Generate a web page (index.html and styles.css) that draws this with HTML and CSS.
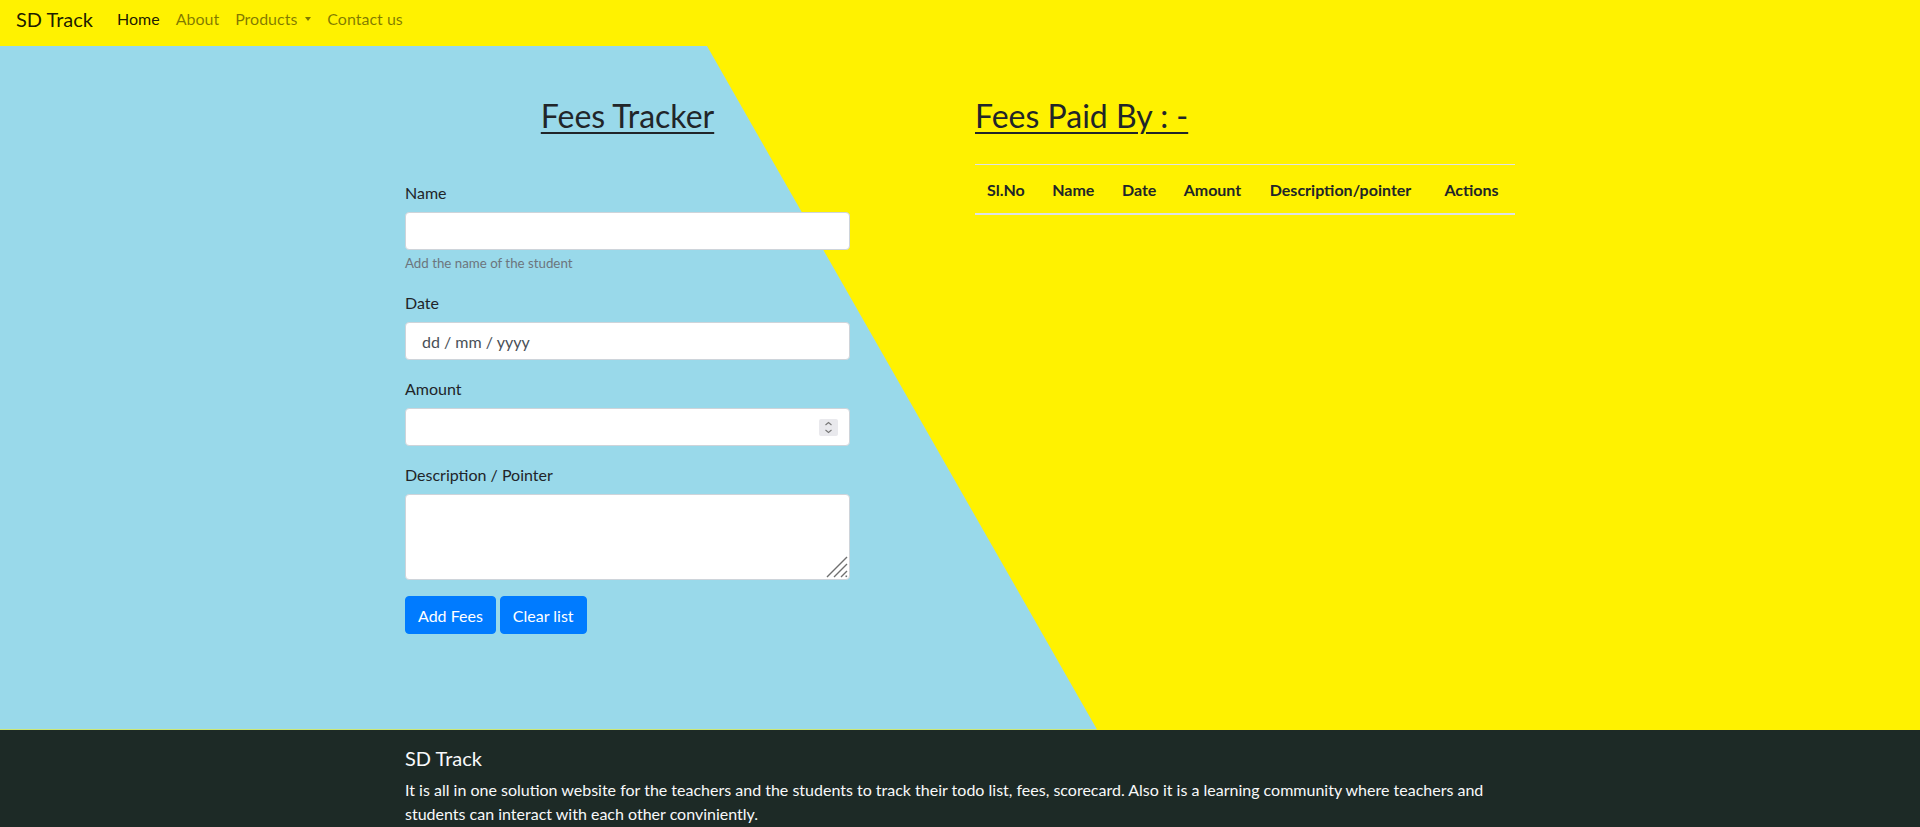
FILE: index.html
```html
<!DOCTYPE html>
<html lang="en">
<head>
<meta charset="utf-8">
<title>SD Track - Fees Tracker</title>
<link rel="stylesheet" href="styles.css">
</head>
<body>
<nav class="navbar">
  <a class="brand" href="#">SD Track</a>
  <ul class="nav-links">
    <li><a class="nav-link active" href="#">Home</a></li>
    <li><a class="nav-link" href="#">About</a></li>
    <li><a class="nav-link" href="#">Products<span class="caret"></span></a></li>
    <li><a class="nav-link" href="#">Contact us</a></li>
  </ul>
</nav>

<main class="hero">
  <div class="container">
    <div class="row">
      <section class="col-form">
        <h2 class="title title-center">Fees Tracker</h2>
        <form class="form">
          <div class="form-group">
            <label class="label" for="name">Name</label>
            <input class="form-control" id="name" type="text">
            <small class="help">Add the name of the student</small>
          </div>
          <div class="form-group">
            <label class="label" for="date">Date</label>
            <input class="form-control date-input" id="date" type="text" placeholder="dd / mm / yyyy">
          </div>
          <div class="form-group">
            <label class="label" for="amount">Amount</label>
            <div class="field">
              <input class="form-control" id="amount" type="text">
              <span class="spinner">
                <svg width="19" height="17" viewBox="0 0 19 17"><path d="M6.5 6 L9.5 3.5 L12.5 6" fill="none" stroke="#777" stroke-width="1.1"/><path d="M6.5 11 L9.5 13.5 L12.5 11" fill="none" stroke="#777" stroke-width="1.1"/></svg>
              </span>
            </div>
          </div>
          <div class="form-group">
            <label class="label" for="desc">Description / Pointer</label>
            <div class="field">
              <textarea class="form-control textarea" id="desc" rows="3"></textarea>
              <span class="grip">
                <svg width="22" height="22" viewBox="0 0 22 22"><path d="M1 21 L21 1 M8 21 L21 8 M15 21 L21 15" stroke="#6f6f6f" stroke-width="1.4" fill="none"/><rect x="19.5" y="19.5" width="1.6" height="1.6" fill="#6f6f6f"/></svg>
              </span>
            </div>
          </div>
          <div class="actions">
            <button class="btn" type="button">Add Fees</button>
            <button class="btn" type="button">Clear list</button>
          </div>
        </form>
      </section>
      <section class="col-table">
        <h2 class="title">Fees Paid By : -</h2>
        <table class="table">
          <thead>
            <tr>
              <th>Sl.No</th>
              <th>Name</th>
              <th>Date</th>
              <th>Amount</th>
              <th>Description/pointer</th>
              <th>Actions</th>
            </tr>
          </thead>
          <tbody></tbody>
        </table>
      </section>
    </div>
  </div>
</main>

<footer class="footer">
  <div class="container">
    <h5 class="footer-title">SD Track</h5>
    <p class="footer-text">It is all in one solution website for the teachers and the students to track their todo list, fees, scorecard. Also it is a learning community where teachers and students can interact with each other conviniently.</p>
  </div>
</footer>
</body>
</html>
```

FILE: styles.css
```css
* { box-sizing: border-box; }

html, body {
  margin: 0;
  padding: 0;
}

body {
  font-family: Lato, "Open Sans", "Liberation Sans", sans-serif;
  font-size: 16px;
  line-height: 1.5;
  color: #212529;
  background: #fff200;
}

/* ---------- navbar ---------- */
.navbar {
  display: flex;
  align-items: center;
  height: 46px;
  padding: 0 16px 8px 16px;
  background: #fff200;
}

.brand {
  font-size: 20px;
  line-height: 30px;
  color: rgba(0, 0, 0, 0.9);
  text-decoration: none;
  margin-right: 16px;
}

.nav-links {
  display: flex;
  list-style: none;
  margin: 0;
  padding: 0;
}

.nav-link {
  display: block;
  padding: 0 8px;
  line-height: 24px;
  color: rgba(0, 0, 0, 0.5);
  text-decoration: none;
}

.nav-link.active { color: rgba(0, 0, 0, 0.9); }

.caret {
  display: inline-block;
  margin-left: 8px;
  vertical-align: 4px;
  border-top: 4px solid rgba(0, 0, 0, 0.5);
  border-left: 3.5px solid transparent;
  border-right: 3.5px solid transparent;
}

/* ---------- hero ---------- */
.hero {
  position: relative;
  background: #fff200;
  padding: 51px 0 96px;
}

.hero::before {
  content: "";
  position: absolute;
  inset: 0;
  background: #99d9ea;
  clip-path: polygon(0 0, 707px 0, 1097px 100%, 0 100%);
}

.container {
  position: relative;
  width: 1140px;
  margin: 0 auto;
  padding: 0 15px;
}

.row {
  display: flex;
  margin: 0 -15px;
}

.col-form {
  width: 475px;
  padding: 0 15px;
}

.col-table {
  width: 570px;
  margin-left: 95px;
  padding: 0 15px;
}

.title {
  font-size: 32px;
  font-weight: 400;
  line-height: 1.2;
  margin: 0 0 45px;
  text-decoration: underline;
  text-decoration-thickness: 2px;
  text-underline-offset: 4px;
}

.col-table .title { margin-bottom: 28.6px; }

.title-center { text-align: center; }

.form { margin: 0; }

.form-group { margin-bottom: 16px; }

.label {
  display: inline-block;
  padding-top: 1px;
  margin-bottom: 7px;
}

.form-control {
  display: block;
  width: 100%;
  height: 38px;
  padding: 6px 12px;
  font-family: inherit;
  font-size: 16px;
  line-height: 1.5;
  color: #495057;
  background: #fff;
  border: 1px solid #ced4da;
  border-radius: 4px;
  outline: none;
}

.date-input::placeholder {
  color: #495057;
  opacity: 1;
}

.date-input { padding: 7px 12px 5px 16px; }

.textarea {
  height: 86px;
  resize: none;
}

.help {
  display: block;
  margin-top: 4px;
  font-size: 13.3px;
  line-height: 19.2px;
  color: #6c757d;
}

.field { position: relative; }

.spinner {
  position: absolute;
  right: 12px;
  top: 11px;
  width: 19px;
  height: 17px;
  background: #e9e9ed;
  border-radius: 2px;
  display: flex;
}

.grip {
  position: absolute;
  right: 2px;
  bottom: 2px;
  width: 22px;
  height: 22px;
  display: flex;
}

.actions {
  display: flex;
  gap: 4px;
}

.btn {
  font-family: inherit;
  font-size: 16px;
  line-height: 1.5;
  padding: 7px 12px 5px;
  color: #fff;
  background: #007bff;
  border: 1px solid #007bff;
  border-radius: 4px;
}

/* ---------- table ---------- */
.table {
  width: 100%;
  border-collapse: collapse;
}

.table th {
  padding: 13px 12px 11px;
  text-align: left;
  font-weight: 700;
  line-height: 24px;
  white-space: nowrap;
  border-top: 1px solid #dee2e6;
  border-bottom: 2px solid #dee2e6;
}

/* ---------- footer ---------- */
.footer {
  background: #1d2a26;
  color: #f8f9fa;
  padding: 16px 0;
}

.footer-title {
  font-size: 20px;
  font-weight: 400;
  line-height: 1.2;
  margin: 0 0 8px;
}

.footer-text {
  margin: 0 0 16px;
}
```
